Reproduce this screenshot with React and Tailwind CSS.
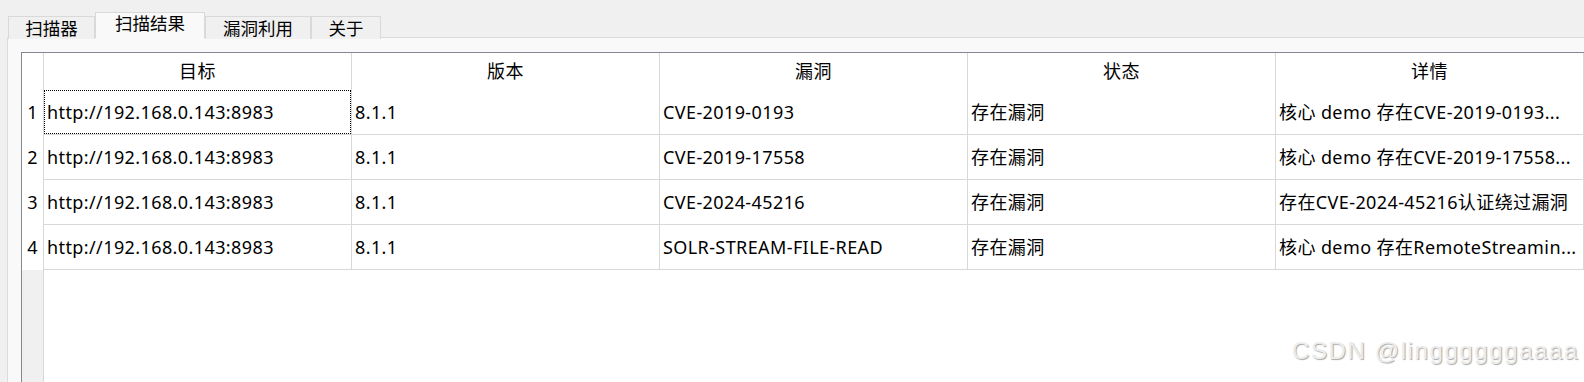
import React from 'react';

const tabs = [
    { label: '扫描器', w: 'w-[87px]' },
    { label: '扫描结果', w: 'w-[110px]', active: true },
    { label: '漏洞利用', w: 'w-[106px]' },
    { label: '关于', w: 'w-[70px]' },
];

const columns = ['目标', '版本', '漏洞', '状态', '详情'];

const rows = [
    ['http://192.168.0.143:8983', '8.1.1', 'CVE-2019-0193', '存在漏洞', '核心 demo 存在CVE-2019-0193...'],
    ['http://192.168.0.143:8983', '8.1.1', 'CVE-2019-17558', '存在漏洞', '核心 demo 存在CVE-2019-17558...'],
    ['http://192.168.0.143:8983', '8.1.1', 'CVE-2024-45216', '存在漏洞', '存在CVE-2024-45216认证绕过漏洞'],
    ['http://192.168.0.143:8983', '8.1.1', 'SOLR-STREAM-FILE-READ', '存在漏洞', '核心 demo 存在RemoteStreamin...'],
];

const App = () => {
    return (
        <div className="w-[1584px] h-[382px] bg-[#f0f0f0] relative overflow-hidden text-black font-['Noto_Sans','Noto_Sans_CJK_SC',sans-serif]">
            {/* 标签栏 */}
            <div className="flex items-end pl-[8px] h-[38px] relative z-10">
                {tabs.map((t) => (
                    <div
                        key={t.label}
                        className={`${t.w} flex items-center justify-center border border-b-0 border-[#d9d9d9] text-[17.5px] leading-none
                            ${t.active ? 'h-[26px] bg-[#f9f9f9] pb-[4px]' : 'h-[23px] bg-[#f0f0f0] -mb-[1px] pt-[1px]'}`}
                    >
                        {t.label}
                    </div>
                ))}
            </div>

            {/* 面板 */}
            <div className="ml-[7px] -mt-[1px] h-[346px] border-t border-l border-[#dcdcdc] bg-[#f9f9f9] pt-[14px] pl-[13px]">
                <div className="h-full border border-r-0 border-[#828790] bg-white flex text-[18px] tracking-[0.4px]">
                    {/* 行号列 */}
                    <div className="w-[23px] border-r border-[#d8d8d8] flex flex-col">
                        <div className="h-[37px] bg-white" />
                        {rows.map((_, i) => (
                            <div key={i} className="h-[45px] flex items-center justify-center bg-white">{i + 1}</div>
                        ))}
                        <div className="flex-1 bg-[#f0f0f0]" />
                    </div>

                    <div className="flex-1 flex flex-col">
                        {/* 表头 */}
                        <div className="flex h-[37px]">
                            {columns.map((c) => (
                                <div key={c} className="w-[308px] shrink-0 border-r border-[#d8d8d8] flex items-center justify-center">{c}</div>
                            ))}
                        </div>
                        {rows.map((r, i) => (
                            <div key={i} className="flex h-[45px] border-b border-[#d8d8d8]">
                                {r.map((cell, j) => (
                                    <div key={j} className="w-[308px] shrink-0 border-r border-[#d8d8d8] flex items-center pl-[3px] whitespace-nowrap overflow-hidden relative">
                                        {cell}
                                        {i === 0 && j === 0 && (
                                            <div className="absolute left-0 top-0 right-0 bottom-0 border border-dotted border-black" />
                                        )}
                                    </div>
                                ))}
                            </div>
                        ))}
                    </div>
                </div>
            </div>

            {/* 水印 */}
            <div className="absolute left-[1292px] top-[339px] text-[24px] leading-none tracking-[1.6px] text-[#ededed] font-['Liberation_Sans',sans-serif] [text-shadow:1px_1px_1px_#a8a8a8]">
                CSDN @linggggggaaaa
            </div>
        </div>
    );
};

export default App;
